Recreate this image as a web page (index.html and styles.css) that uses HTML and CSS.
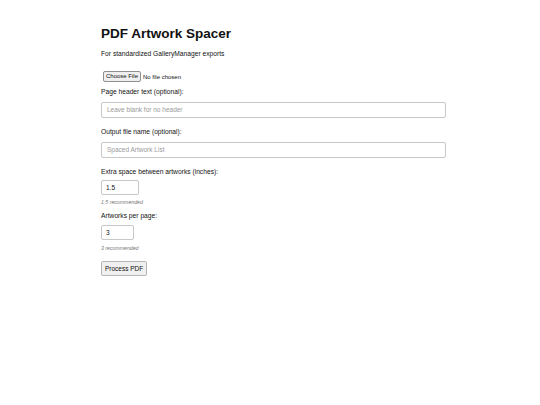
FILE: index.html
```html
<!DOCTYPE html>
<html>
<head>
<meta charset="utf-8">
<link rel="stylesheet" href="styles.css">
</head>
<body>
<main class="page">
  <h1 class="title">PDF Artwork Spacer</h1>
  <p class="subtitle">For standardized GalleryManager exports</p>
  <form class="form">
    <div class="file-row"><span class="file-btn">Choose File</span><span class="file-name">No file chosen</span></div>
    <label class="label">Page header text (optional):</label>
    <div class="text-input placeholder">Leave blank for no header</div>
    <label class="label">Output file name (optional):</label>
    <div class="text-input placeholder">Spaced Artwork List</div>
    <label class="label">Extra space between artworks (inches):</label>
    <div class="num-input wide">1.5</div>
    <div class="hint">1.5 recommended</div>
    <label class="label after-hint">Artworks per page:</label>
    <div class="num-input second">3</div>
    <div class="hint second">3 recommended</div>
    <div class="submit">Process PDF</div>
  </form>
</main>
</body>
</html>
```
FILE: styles.css
```css
html, body {
  margin: 0;
  padding: 0;
  background: #fff;
}
body {
  font-family: "Liberation Sans", Arial, sans-serif;
  color: #111;
}
.page {
  width: 345px;
  margin-left: 101px;
  padding-top: 25px;
}
.title {
  font-size: 13.5px;
  font-weight: bold;
  margin: 0;
  line-height: 18px;
}
.subtitle {
  font-size: 6.7px;
  line-height: 9px;
  margin: 6px 0 0 0;
}
.form {
  display: flex;
  flex-direction: column;
  align-items: flex-start;
}
.file-row {
  margin-top: 13px;
  display: flex;
  align-items: center;
  font-size: 6px;
}
.file-btn {
  margin-left: 2px;
  border: 1px solid #8f8f8f;
  background: #efefef;
  border-radius: 2px;
  padding: 1px 2px;
  line-height: 7px;
}
.file-name {
  margin-left: 2px;
}
.label {
  font-size: 6.7px;
  line-height: 9px;
  margin-top: 5px;
}
.label.after-hint {
  margin-top: 6px;
}
.text-input {
  box-sizing: border-box;
  width: 345px;
  height: 16px;
  border: 1px solid #c8c8c8;
  border-radius: 2px;
  font-size: 6.5px;
  line-height: 14px;
  padding: 0 5px;
  margin-top: 6px;
  margin-bottom: 4px;
}
.placeholder {
  color: #9a9a9a;
}
.num-input {
  box-sizing: border-box;
  width: 33px;
  height: 15px;
  border: 1px solid #c8c8c8;
  border-radius: 2px;
  font-size: 6.5px;
  line-height: 13px;
  padding: 0 4px;
  margin-top: 4px;
}
.num-input.wide {
  width: 38px;
}
.num-input.second {
  margin-top: 5px;
}
.hint {
  font-size: 5.2px;
  font-style: italic;
  color: #777;
  margin-top: 4px;
  line-height: 6px;
}
.hint.second {
  margin-top: 5px;
}
.submit {
  margin-top: 10px;
  box-sizing: border-box;
  height: 15px;
  border: 1px solid #b5b5b5;
  background: #f0f0f0;
  border-radius: 2px;
  font-size: 6.5px;
  line-height: 13px;
  padding: 0 3px;
}
```
